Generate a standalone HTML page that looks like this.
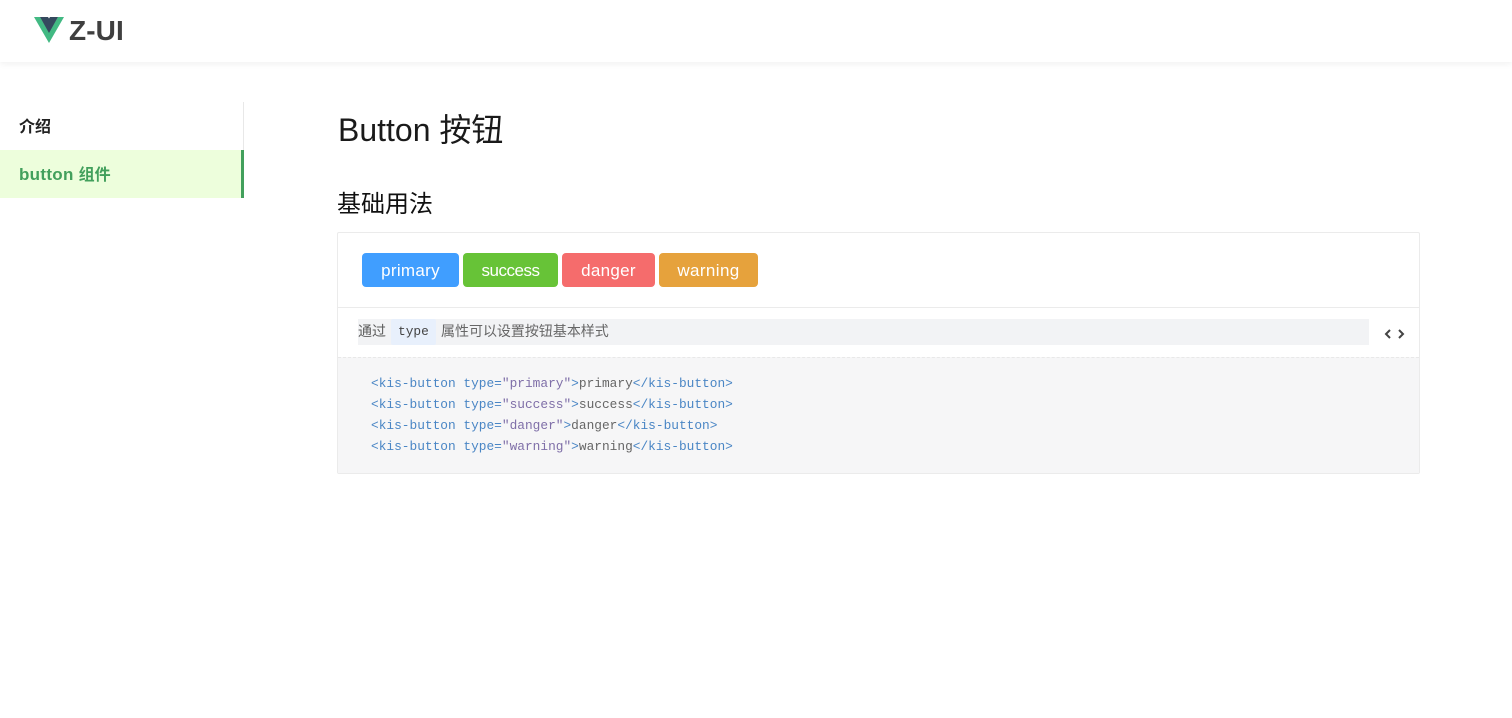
<!DOCTYPE html>
<html lang="zh">
<head>
<meta charset="utf-8">
<title>Z-UI</title>
<style>
html,body{margin:0;padding:0;background:#fff;width:1512px;height:718px;overflow:hidden}
body{position:relative;font-family:"Liberation Sans","Noto Sans CJK SC",sans-serif}
.a{position:absolute;white-space:pre}
.header{position:absolute;left:0;top:0;width:1512px;height:62px;background:#fff;box-shadow:0 2px 6px rgba(0,0,0,.06)}
.btn{position:absolute;top:253px;height:34px;line-height:35px;border-radius:4px;color:#fff;text-align:center;font-size:17px}
.code{position:absolute;left:371px;font-family:"Liberation Mono",monospace;font-size:12.83px;height:21px;line-height:21px;white-space:pre;color:#4a86c5}
.code i{font-style:normal;color:#7f6fa8}
.code b{font-weight:normal;color:#666}
</style>
</head>
<body>
<div class="header"></div>
<svg class="a" style="left:34px;top:17px" width="30" height="26" viewBox="0 0 30 26">
<polygon points="0,0 6,0 15,15 24,0 30,0 15,26" fill="#42b983"/>
<polygon points="6,0 14,0 15,1.5 16,0 24,0 15,16" fill="#35495e"/>
</svg>
<div class="a" style="left:69px;top:14px;font-size:28px;line-height:33px;font-weight:bold;letter-spacing:.1px;color:#3f3f3f">Z-UI</div>

<div class="a" style="left:243px;top:102px;width:1px;height:48px;background:#e8e8e8"></div>
<div class="a" style="left:19px;top:116px;font-size:16px;line-height:24px;font-weight:bold;color:#222">介绍</div>
<div class="a" style="left:0;top:150px;width:241px;height:48px;background:#edfedc"></div>
<div class="a" style="left:241px;top:150px;width:3px;height:48px;background:#42a05c"></div>
<div class="a" style="left:19px;top:163px;font-size:16px;line-height:24px;font-weight:bold;color:#42a05c"><span style="font-size:17px;letter-spacing:.3px">button</span> <span style="margin-left:.5px">组件</span></div>

<div class="a" style="left:338px;top:108px;font-size:32px;line-height:44px;color:#1a1a1a">Button 按钮</div>
<div class="a" style="left:337px;top:188px;font-size:24px;line-height:34px;color:#111">基础用法</div>

<div class="a" style="left:337px;top:232px;width:1081px;height:240px;border:1px solid #ebebeb;border-radius:2px"></div>
<div class="btn" style="left:362px;width:97px;background:#409eff;letter-spacing:.3px">primary</div>
<div class="btn" style="left:463px;width:95px;background:#67c337;letter-spacing:-.5px">success</div>
<div class="btn" style="left:562px;width:93px;background:#f56c6c;letter-spacing:.3px">danger</div>
<div class="btn" style="left:659px;width:99px;background:#e6a23c;letter-spacing:.4px">warning</div>

<div class="a" style="left:338px;top:307px;width:1081px;height:1px;background:#ebebeb"></div>
<div class="a" style="left:358px;top:319px;width:1011px;height:26px;background:#f2f3f5"></div>
<div class="a" style="left:391px;top:319px;width:45px;height:26px;background:#e8f0fc;border-radius:2px"></div>
<div class="a" style="left:358px;top:319px;font-size:14px;line-height:25px;color:#5c5c5c">通过</div>
<div class="a" style="left:398px;top:319px;font-family:'Liberation Mono',monospace;font-size:12.83px;line-height:26px;color:#444">type</div>
<div class="a" style="left:441px;top:319px;font-size:14px;line-height:25px;letter-spacing:-.02px;color:#666">属性可以设置按钮基本样式</div>

<svg class="a" style="left:1384px;top:329px" width="21" height="10" viewBox="0 0 21 10">
<path d="M6 1 L2 5 L6 9" fill="none" stroke="#444" stroke-width="2"/>
<path d="M15 1 L19 5 L15 9" fill="none" stroke="#444" stroke-width="2"/>
</svg>

<div class="a" style="left:338px;top:357px;width:1081px;height:116px;background:#f6f6f7;border-top:1px dashed #e8e8e8;box-sizing:border-box"></div>
<div class="code" style="top:373px">&lt;kis-button type=<i>"primary"</i>&gt;<b>primary</b>&lt;/kis-button&gt;</div>
<div class="code" style="top:394px">&lt;kis-button type=<i>"success"</i>&gt;<b>success</b>&lt;/kis-button&gt;</div>
<div class="code" style="top:415px">&lt;kis-button type=<i>"danger"</i>&gt;<b>danger</b>&lt;/kis-button&gt;</div>
<div class="code" style="top:436px">&lt;kis-button type=<i>"warning"</i>&gt;<b>warning</b>&lt;/kis-button&gt;</div>
</body>
</html>
